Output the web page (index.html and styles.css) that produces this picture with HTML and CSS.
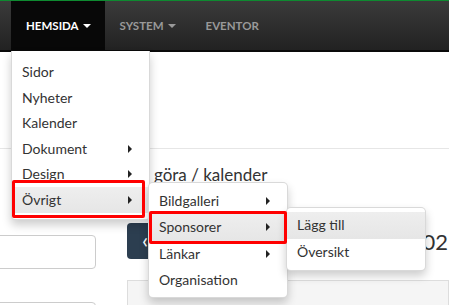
FILE: index.html
```html
<!DOCTYPE html>
<html lang="sv">
<head>
    <meta charset="UTF-8">
    <title>Hemsida</title>
    <link rel="stylesheet" href="styles.css">
</head>
<body>
    <!-- toppmeny -->
    <div class="navbar">
        <div class="nav-item active">HEMSIDA <span class="caret"></span></div>
        <div class="nav-item">SYSTEM <span class="caret"></span></div>
        <div class="nav-item">EVENTOR</div>
    </div>

    <div class="page-head"></div>

    <div class="content">
        <div class="side">
            <div class="field"></div>
            <div class="field"></div>
        </div>
        <div class="main">
            <h2 class="title">Att göra / kalender</h2>
            <div class="cal-bar">
                <div class="btn-prev">&lsaquo;</div>
                <div class="month">Vecka 02</div>
            </div>
            <div class="cal-box"></div>
        </div>
    </div>

    <!-- dropdowns -->
    <ul class="menu menu-1">
        <li>Sidor</li>
        <li>Nyheter</li>
        <li>Kalender</li>
        <li class="sub">Dokument</li>
        <li class="sub">Design</li>
        <li class="sub hover">Övrigt</li>
    </ul>
    <ul class="menu menu-2">
        <li class="sub">Bildgalleri</li>
        <li class="sub hover">Sponsorer</li>
        <li class="sub">Länkar</li>
        <li>Organisation</li>
    </ul>
    <ul class="menu menu-3">
        <li class="hover">Lägg till</li>
        <li>Översikt</li>
    </ul>

    <div class="mark mark-1"></div>
    <div class="mark mark-2"></div>
</body>
</html>
```

FILE: styles.css
```css
body{
    margin:0;
    font-family:Lato, "Open Sans", sans-serif;
    color:#333;
    background:#fff;
    overflow:hidden;
}

.navbar{
    display:flex;
    height:49px;
    padding-left:11px;
    border-top:1px solid #0e8a30;
    border-bottom:2px solid #0a0a0a;
    background:linear-gradient(#3a3a3a,#222);
}
.nav-item{
    display:flex;
    align-items:center;
    gap:4px;
    padding:0 15px;
    font-size:11.5px;
    font-weight:bold;
    color:#999;
}
.nav-item.active{
    background:#080808;
    color:#fff;
    padding-right:14px;
}
.caret{
    width:0;
    height:0;
    border-left:4px solid transparent;
    border-right:4px solid transparent;
    border-top:4px solid currentColor;
}

.page-head{
    height:96px;
    border-bottom:1px solid #e6e6e6;
}

.content{
    display:flex;
    gap:31px;
}
.side{
    width:96px;
    padding-top:86px;
}
.field{
    height:32px;
    margin-left:-6px;
    border:1px solid #ccc;
    border-radius:4px;
    margin-bottom:33px;
}
.main{
    flex:1;
    min-width:0;
}
.title{
    margin:14px 0 0;
    font-size:17px;
    font-weight:normal;
    line-height:24px;
}
.cal-bar{
    display:flex;
    align-items:center;
    margin-top:36px;
}
.btn-prev{
    width:36px;
    height:36px;
    background:#2c3e50;
    border-radius:4px 0 0 4px;
    color:#fff;
    font-size:22px;
    line-height:34px;
    text-align:center;
}
.month{
    margin-left:auto;
    margin-right:1px;
    font-size:22px;
}
.cal-box{
    margin-top:21px;
    height:60px;
    border:1px solid #ddd;
    background:#f5f5f5;
}

.menu{
    position:absolute;
    margin:0;
    list-style:none;
    background:#fff;
    border:1px solid rgba(0,0,0,.15);
    box-shadow:0 5px 10px rgba(0,0,0,.2);
    font-size:14px;
}
.menu li{
    position:relative;
    padding:0 10px;
    line-height:25.6px;
    white-space:nowrap;
}
.menu li.sub::after{
    content:"";
    position:absolute;
    right:17px;
    top:9px;
    border-top:4px solid transparent;
    border-bottom:4px solid transparent;
    border-left:4px solid #222;
}
.menu li.hover{
    background:linear-gradient(#eee,#e6e6e6);
}
.menu-1{
    top:51px;
    left:11px;
    width:137px;
    padding:8px 0 6px;
    border-top:none;
    border-radius:0 0 4px 4px;
}
.menu-2{
    top:182px;
    left:148px;
    width:138px;
    padding:5px 0 4px;
    border-radius:5px;
}
.menu-2 li{
    line-height:26.3px;
}
.menu-3{
    top:207px;
    left:286px;
    width:138px;
    padding:4px 0 5px;
    border-radius:5px;
}
.menu-3 li{
    line-height:26.5px;
}

.mark{
    position:absolute;
    border:3px solid #f00;
    border-radius:2px;
}
.mark-1{
    top:180px;
    left:12px;
    width:127px;
    height:32px;
}
.mark-2{
    top:211px;
    left:149px;
    width:132px;
    height:27px;
}
```
